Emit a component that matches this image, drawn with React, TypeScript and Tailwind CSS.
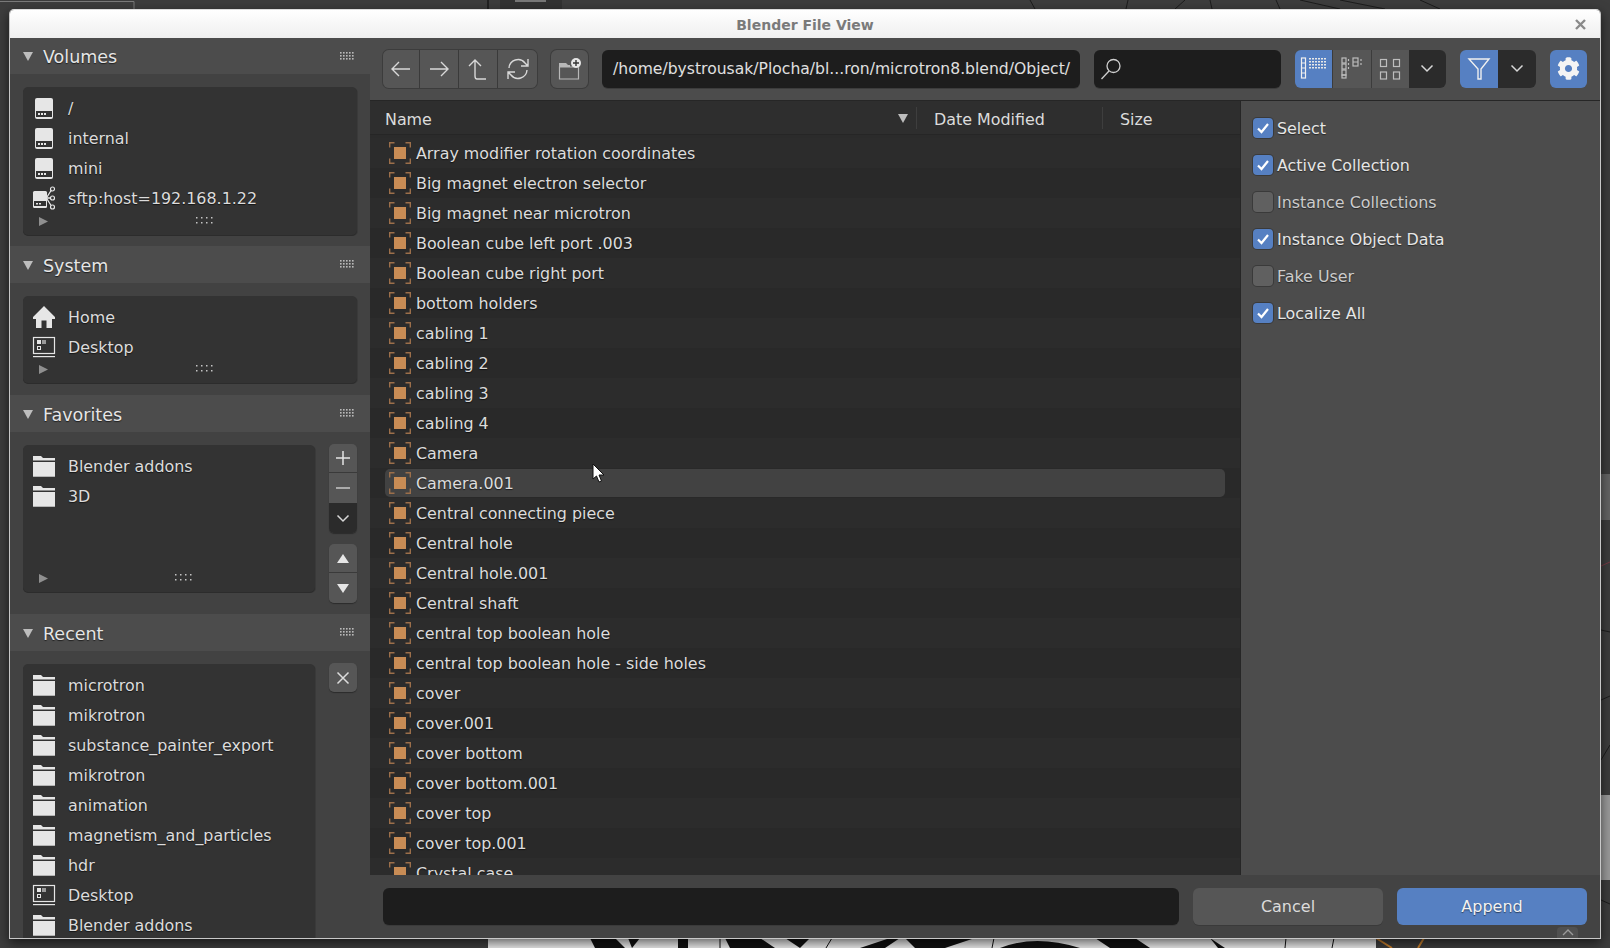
import { FaCog } from "react-icons/fa";

const FILES = [
  "Array modifier rotation coordinates",
  "Big magnet electron selector",
  "Big magnet near microtron",
  "Boolean cube left port .003",
  "Boolean cube right port",
  "bottom holders",
  "cabling 1",
  "cabling 2",
  "cabling 3",
  "cabling 4",
  "Camera",
  "Camera.001",
  "Central connecting piece",
  "Central hole",
  "Central hole.001",
  "Central shaft",
  "central top boolean hole",
  "central top boolean hole - side holes",
  "cover",
  "cover.001",
  "cover bottom",
  "cover bottom.001",
  "cover top",
  "cover top.001",
  "Crystal case",
];

const OPTIONS = [
  { label: "Select", on: true },
  { label: "Active Collection", on: true },
  { label: "Instance Collections", on: false },
  { label: "Instance Object Data", on: true },
  { label: "Fake User", on: false },
  { label: "Localize All", on: true },
];

type IconName = "drive" | "net" | "home" | "desktop" | "folder";

function DriveIcon() {
  return (
    <svg width="24" height="24" viewBox="0 0 24 24">
      <rect x="3" y="2" width="18" height="21" rx="2" fill="#e6e6e6" />
      <rect x="4" y="15" width="16" height="6" fill="#333" />
      <rect x="6" y="17" width="2" height="2" fill="#e6e6e6" />
      <rect x="9" y="17" width="2" height="2" fill="#e6e6e6" />
      <rect x="12" y="17" width="2" height="2" fill="#e6e6e6" />
    </svg>
  );
}

function NetDriveIcon() {
  return (
    <svg width="24" height="24" viewBox="0 0 24 24">
      <rect x="1" y="5" width="14" height="17" rx="1.5" fill="#e6e6e6" />
      <rect x="2" y="15" width="12" height="5" fill="#333" />
      <rect x="4" y="17" width="2" height="1.5" fill="#e6e6e6" />
      <rect x="7" y="17" width="2" height="1.5" fill="#e6e6e6" />
      <path d="M15 11 L20 3 M15 12 H20 M15 13 L20 21" stroke="#e6e6e6" strokeWidth="1.3" fill="none" />
      <circle cx="20.5" cy="3" r="2" fill="#333" stroke="#e6e6e6" strokeWidth="1.2" />
      <circle cx="20.5" cy="12" r="2" fill="#333" stroke="#e6e6e6" strokeWidth="1.2" />
      <circle cx="20.5" cy="21" r="2" fill="#333" stroke="#e6e6e6" strokeWidth="1.2" />
    </svg>
  );
}

function HomeIcon() {
  return (
    <svg width="24" height="24" viewBox="0 0 24 24">
      <path d="M12 1 L23 12 V14 H20 V23 H14.5 V15.5 H9.5 V23 H4 V14 H1 V12 Z" fill="#e6e6e6" />
    </svg>
  );
}

function DesktopIcon() {
  return (
    <svg width="24" height="24" viewBox="0 0 24 24">
      <rect x="1.5" y="2.5" width="21" height="16" fill="none" stroke="#e6e6e6" strokeWidth="1.2" />
      <rect x="1" y="21" width="22" height="1.2" fill="#e6e6e6" />
      <rect x="5" y="5" width="4" height="4" fill="#e6e6e6" />
      <rect x="10" y="5" width="4" height="4" fill="#9a9a9a" />
      <rect x="5.5" y="11.5" width="3" height="3" fill="none" stroke="#e6e6e6" strokeWidth="1" />
    </svg>
  );
}

function FolderIcon() {
  return (
    <svg width="24" height="24" viewBox="0 0 24 24">
      <path d="M1 2 H9 L11 4 H23 V6.5 H1 Z" fill="#e6e6e6" />
      <path d="M1 8 H23 V23 H1 Z" fill="#e6e6e6" />
      <rect x="1" y="22" width="22" height="1" fill="#b4b4b4" />
    </svg>
  );
}

function PlaceIcon({ name }: { name: IconName }) {
  if (name === "drive") return <DriveIcon />;
  if (name === "net") return <NetDriveIcon />;
  if (name === "home") return <HomeIcon />;
  if (name === "desktop") return <DesktopIcon />;
  return <FolderIcon />;
}

function ObjectIcon() {
  return (
    <svg width="22" height="22" viewBox="0 0 22 22" className="shrink-0">
      <path
        d="M.7 5.5 V.7 H5.5 M16.5 .7 H21.3 V5.5 M.7 16.5 V21.3 H5.5 M16.5 21.3 H21.3 V16.5"
        fill="none"
        stroke="#9c6f4a"
        strokeWidth="1.4"
      />
      <rect x="5" y="5" width="12" height="12" fill="#c88c55" />
    </svg>
  );
}

function Grip({ cols, rows, color, step = 3, dot = 1.6 }: { cols: number; rows: number; color: string; step?: number; dot?: number }) {
  const dots = [];
  for (let r = 0; r < rows; r++) {
    for (let c = 0; c < cols; c++) {
      dots.push(<rect key={`${r}-${c}`} x={c * step} y={r * step} width={dot} height={dot} fill={color} />);
    }
  }
  return (
    <svg width={cols * step} height={rows * step}>
      {dots}
    </svg>
  );
}

function Triangle({ dir, size, color }: { dir: "down" | "right"; size: number; color: string }) {
  return (
    <svg width={size} height={size} viewBox="0 0 10 10">
      <path d={dir === "down" ? "M0 1 H10 L5 10 Z" : "M0 0 L10 5 L0 10 Z"} fill={color} />
    </svg>
  );
}

function Chevron({ color = "#d8d8d8" }: { color?: string }) {
  return (
    <svg width="14" height="9" viewBox="0 0 14 9">
      <path d="M1.5 1.5 L7 7 L12.5 1.5" fill="none" stroke={color} strokeWidth="1.5" />
    </svg>
  );
}

function SectionHeader({ title, top }: { title: string; top?: boolean }) {
  return (
    <div className={`flex items-center bg-[#4c4c4c] pl-[13px] pr-[15px] ${top ? "h-[36px]" : "h-[37px]"}`}>
      <Triangle dir="down" size={10} color="#bdbdbd" />
      <span className={`ml-[10px] flex-1 text-[17.5px] text-[#e6e6e6] [text-shadow:0_1px_1px_rgba(0,0,0,0.6)] ${top ? "pt-[2px]" : "pt-[4px]"}`}>
        {title}
      </span>
      <Grip cols={5} rows={3} color="#b9b9b9" />
    </div>
  );
}

function PlaceRow({ icon, label }: { icon: IconName; label: string }) {
  return (
    <div className="flex h-[30px] items-center pl-[9px]">
      <div className="w-[24px] shrink-0">
        <PlaceIcon name={icon} />
      </div>
      <span className="ml-[12px] whitespace-nowrap pt-[2px] text-[15.9px] text-[#dcdcdc] [text-shadow:0_1px_1px_rgba(0,0,0,0.6)]">
        {label}
      </span>
    </div>
  );
}

function PlaceBox({
  items,
  className,
  footer = true,
}: {
  items: { icon: IconName; label: string }[];
  className: string;
  footer?: boolean;
}) {
  return (
    <div className={`flex flex-col rounded-[5px] bg-[#333333] pt-[6px] shadow-[0_1px_0_#2c2c2c,1px_1px_0_#3a3a3a] ${className}`}>
      <div className="flex-1">
        {items.map((it, i) => (
          <PlaceRow key={i} icon={it.icon} label={it.label} />
        ))}
      </div>
      {footer && (
        <div className="relative flex h-[20px] shrink-0 items-center justify-center pb-[6px] pl-[32px]">
          <div className="absolute left-[16px] top-[2px]">
            <Triangle dir="right" size={9} color="#8f8f8f" />
          </div>
          <Grip cols={4} rows={2} color="#c4c4c4" step={5} dot={1.5} />
        </div>
      )}
    </div>
  );
}

function SideButton({ children, className }: { children: React.ReactNode; className: string }) {
  return <div className={`flex w-[28px] items-center justify-center ${className}`}>{children}</div>;
}

function Sidebar() {
  return (
    <div className="flex w-[360px] shrink-0 flex-col overflow-hidden">
      <SectionHeader title="Volumes" top />
      <div className="h-[172px] bg-[#424242] pl-[13px] pr-[13px] pt-[13px]">
        <PlaceBox
          className="h-[148px]"
          items={[
            { icon: "drive", label: "/" },
            { icon: "drive", label: "internal" },
            { icon: "drive", label: "mini" },
            { icon: "net", label: "sftp:host=192.168.1.22" },
          ]}
        />
      </div>
      <SectionHeader title="System" />
      <div className="h-[112px] bg-[#424242] pl-[13px] pr-[13px] pt-[13px]">
        <PlaceBox
          className="h-[87px]"
          items={[
            { icon: "home", label: "Home" },
            { icon: "desktop", label: "Desktop" },
          ]}
        />
      </div>
      <SectionHeader title="Favorites" />
      <div className="flex h-[182px] gap-[14px] bg-[#424242] pl-[13px] pr-[13px] pt-[13px]">
        <PlaceBox
          className="h-[147px] w-[292px]"
          items={[
            { icon: "folder", label: "Blender addons" },
            { icon: "folder", label: "3D" },
          ]}
        />
        <div className="-mt-[1px] flex flex-col">
          <div className="flex flex-col overflow-hidden rounded-[5px] shadow-[0_1px_1px_#2c2c2c]">
            <SideButton className="h-[29px] border-b border-[#3a3a3a] bg-[#565656]">
              <svg width="16" height="16" viewBox="0 0 16 16">
                <path d="M8 1 V15 M1 8 H15" stroke="#e4e4e4" strokeWidth="1.5" />
              </svg>
            </SideButton>
            <SideButton className="h-[30px] bg-[#565656]">
              <svg width="16" height="16" viewBox="0 0 16 16">
                <path d="M1 8 H15" stroke="#c8c8c8" strokeWidth="1.5" />
              </svg>
            </SideButton>
            <SideButton className="h-[30px] bg-[#2b2b2b]">
              <Chevron />
            </SideButton>
          </div>
          <div className="mt-[11px] flex flex-col overflow-hidden rounded-[5px] shadow-[0_1px_1px_#2c2c2c]">
            <SideButton className="h-[29px] border-b border-[#3a3a3a] bg-[#565656]">
              <svg width="14" height="11" viewBox="0 0 14 11">
                <path d="M7 1 L13 10 H1 Z" fill="#e6e6e6" />
              </svg>
            </SideButton>
            <SideButton className="h-[30px] bg-[#565656]">
              <svg width="14" height="11" viewBox="0 0 14 11">
                <path d="M1 1 H13 L7 10 Z" fill="#e6e6e6" />
              </svg>
            </SideButton>
          </div>
        </div>
      </div>
      <SectionHeader title="Recent" />
      <div className="flex min-h-0 flex-1 gap-[14px] overflow-hidden bg-[#424242] pl-[13px] pr-[13px] pt-[13px]">
        <PlaceBox
          className="h-[300px] w-[292px]"
          footer={false}
          items={[
            { icon: "folder", label: "microtron" },
            { icon: "folder", label: "mikrotron" },
            { icon: "folder", label: "substance_painter_export" },
            { icon: "folder", label: "mikrotron" },
            { icon: "folder", label: "animation" },
            { icon: "folder", label: "magnetism_and_particles" },
            { icon: "folder", label: "hdr" },
            { icon: "desktop", label: "Desktop" },
            { icon: "folder", label: "Blender addons" },
          ]}
        />
        <SideButton className="-mt-[1px] h-[29px] rounded-[5px] bg-[#565656] shadow-[0_1px_1px_#2c2c2c]">
          <svg width="14" height="14" viewBox="0 0 14 14">
            <path d="M1.5 1.5 L12.5 12.5 M12.5 1.5 L1.5 12.5" stroke="#dcdcdc" strokeWidth="1.5" />
          </svg>
        </SideButton>
      </div>
    </div>
  );
}

function NavButton({ children, last, className = "w-[39px]" }: { children: React.ReactNode; last?: boolean; className?: string }) {
  return (
    <div className={`flex h-full items-center justify-center bg-[#565656] ${last ? "" : "border-r border-[#3a3a3a]"} ${className}`}>
      {children}
    </div>
  );
}

function ViewIconList() {
  const dots = [];
  for (let r = 0; r < 4; r++) {
    for (let c = 0; c < 6; c++) {
      dots.push(<rect key={`${r}-${c}`} x={9 + c * 3} y={1 + r * 3} width="2" height="1.5" fill="#e8e8e8" />);
    }
  }
  return (
    <svg width="28" height="24" viewBox="0 0 28 24">
      <rect x="1.5" y="1" width="4" height="20" fill="none" stroke="#f0f0f0" strokeWidth="1.2" />
      <path d="M1.5 6 H5.5 M1.5 11 H5.5 M1.5 16 H5.5" stroke="#f0f0f0" strokeWidth="1.2" />
      {dots}
    </svg>
  );
}

function ViewIconMid() {
  return (
    <svg width="24" height="24" viewBox="0 0 24 24" fill="none" stroke="#bdbdbd" strokeWidth="1.2">
      <rect x="2" y="1" width="4" height="5" />
      <rect x="2" y="7" width="4" height="5" />
      <rect x="2" y="13" width="4" height="5" />
      <rect x="2" y="18" width="4" height="3" />
      <rect x="13" y="1" width="5" height="8" />
      <path d="M13 5 H18 M8.5 2 V4 M8.5 6 V8 M8.5 10 V12 M21 2 V4 M21 6 V8" />
    </svg>
  );
}

function ViewIconGrid() {
  return (
    <svg width="24" height="24" viewBox="0 0 24 24" fill="none" stroke="#bdbdbd" strokeWidth="1.2">
      <rect x="2.5" y="2.5" width="6" height="7" />
      <rect x="15.5" y="2.5" width="6" height="7" />
      <rect x="2.5" y="15" width="6" height="7" />
      <rect x="15.5" y="15" width="6" height="7" />
    </svg>
  );
}

function Toolbar() {
  return (
    <div className="flex h-[63px] shrink-0 items-center border-b border-[#262626] bg-[#4c4c4c] pb-[1px] pl-[13px]">
      <div className="flex h-[38px] w-[154px] overflow-hidden rounded-[6px] shadow-[0_0_0_1px_#3c3c3c]">
        <NavButton className="w-[37px]">
          <svg width="22" height="16" viewBox="0 0 22 16" fill="none" stroke="#d8d8d8" strokeWidth="1.4">
            <path d="M20 8 H2 M9 1 L2 8 L9 15" />
          </svg>
        </NavButton>
        <NavButton>
          <svg width="22" height="16" viewBox="0 0 22 16" fill="none" stroke="#d8d8d8" strokeWidth="1.4">
            <path d="M2 8 H20 M13 1 L20 8 L13 15" />
          </svg>
        </NavButton>
        <NavButton>
          <svg width="20" height="22" viewBox="0 0 20 22" fill="none" stroke="#d8d8d8" strokeWidth="1.4">
            <path d="M9 21 H18 M9 21 Q7 21 7 18 V2 M1 8 L7 2 L13 8" />
          </svg>
        </NavButton>
        <NavButton last>
          <svg width="24" height="24" viewBox="0 0 24 24" fill="none" stroke="#d8d8d8" strokeWidth="1.4">
            <path d="M3 11 A9 9 0 0 1 19 6 L22 9 M22 2 V9 H15" />
            <path d="M21 13 A9 9 0 0 1 5 18 L2 15 M2 22 V15 H9" />
          </svg>
        </NavButton>
      </div>
      <div className="ml-[14px] flex h-[38px] w-[37px] items-center justify-center rounded-[6px] bg-[#565656] shadow-[0_0_0_1px_#3c3c3c]">
        <svg width="24" height="22" viewBox="0 0 24 22">
          <path d="M1 5 H8 L10 7 H12 V9 H1 Z" fill="#b8b8b8" />
          <path d="M1.5 9 H20.5 V21 H1.5 Z" fill="none" stroke="#b8b8b8" strokeWidth="1.2" />
          <circle cx="18" cy="5" r="5" fill="#e6e6e6" />
          <path d="M18 2 V8 M15 5 H21" stroke="#333" strokeWidth="1.4" />
        </svg>
      </div>
      <div className="ml-[14px] flex h-[38px] w-[478px] items-center rounded-[6px] bg-[#1d1d1d] pl-[11px] shadow-[0_1px_0_#3c3c3c]">
        <span className="whitespace-nowrap pt-[2px] text-[15.6px] text-[#e0e0e0]">/home/bystrousak/Plocha/bl...ron/microtron8.blend/Object/</span>
      </div>
      <div className="ml-[14px] flex h-[38px] w-[187px] items-center rounded-[6px] bg-[#1d1d1d] pl-[6px] shadow-[0_1px_0_#3c3c3c]">
        <svg width="22" height="24" viewBox="0 0 22 24" fill="none" stroke="#cfcfcf" strokeWidth="1.3">
          <circle cx="13.5" cy="9" r="6.5" />
          <path d="M9 14 L1.5 22" />
        </svg>
      </div>
      <div className="ml-[14px] flex h-[38px] w-[151px] overflow-hidden rounded-[6px]">
        <div className="flex flex-1 items-center justify-center bg-[#5680c2]">
          <ViewIconList />
        </div>
        <div className="flex flex-1 items-center justify-center border-l border-[#3c3c3c] bg-[#565656]">
          <ViewIconMid />
        </div>
        <div className="flex flex-1 items-center justify-center border-l border-[#3c3c3c] bg-[#565656]">
          <ViewIconGrid />
        </div>
        <div className="flex flex-1 items-center justify-center bg-[#2b2b2b]">
          <Chevron />
        </div>
      </div>
      <div className="ml-[14px] flex h-[38px] w-[76px] overflow-hidden rounded-[6px]">
        <div className="flex flex-1 items-center justify-center bg-[#5680c2]">
          <svg width="24" height="24" viewBox="0 0 24 24" fill="none" stroke="#f0f0f0" strokeWidth="1.4">
            <path d="M2 2 H22 L14 12 V22 H11 V12 Z" />
          </svg>
        </div>
        <div className="flex flex-1 items-center justify-center bg-[#2b2b2b]">
          <Chevron />
        </div>
      </div>
      <div className="ml-[14px] flex h-[38px] w-[37px] items-center justify-center rounded-[6px] bg-[#5680c2]">
        <FaCog className="h-[23px] w-[23px] text-[#f4f4f4]" />
      </div>
    </div>
  );
}

function ColumnHeader() {
  return (
    <div className="flex h-[34px] shrink-0 items-center border-b border-[#262626] bg-[#2e2e2e] text-[15.9px] text-[#dcdcdc]">
      <div className="flex h-[22px] w-[547px] items-center justify-between border-r border-[#3e3e3e] pl-[15px] pr-[8px]">
        <span className="pt-[4px]">Name</span>
        <svg width="10" height="10" viewBox="0 0 10 10">
          <path d="M0 1 H10 L5 10 Z" fill="#bdbdbd" />
        </svg>
      </div>
      <div className="flex h-[22px] w-[186px] items-center border-r border-[#3e3e3e] pl-[17px]">
        <span className="pt-[4px]">Date Modified</span>
      </div>
      <div className="pl-[17px] pt-[4px]">Size</div>
    </div>
  );
}

function FileList() {
  return (
    <div className="flex min-h-0 flex-1 flex-col overflow-hidden bg-[#2b2b2b] pt-[3px]">
      {FILES.map((name, i) => (
        <div key={name} className={`h-[30px] shrink-0 px-[15px] py-[1px] ${i % 2 === 0 ? "bg-[#2c2c2c]" : "bg-[#292929]"}`}>
          <div className={`flex h-[28px] items-center rounded-[5px] pl-[4px] ${name === "Camera.001" ? "bg-[#424242]" : ""}`}>
            <ObjectIcon />
            <span className="ml-[5px] whitespace-nowrap pt-[2px] text-[15.9px] text-[#dcdcdc] [text-shadow:0_1px_1px_rgba(0,0,0,0.6)]">
              {name}
            </span>
          </div>
        </div>
      ))}
    </div>
  );
}

function OptionsPanel() {
  return (
    <div className="flex w-[360px] shrink-0 flex-col gap-[15px] border-l border-[#262626] bg-[#4c4c4c] pl-[12px] pt-[16px]">
      {OPTIONS.map((o) => (
        <div key={o.label} className="flex h-[22px] items-center">
          <div
            className={`flex h-[20px] w-[20px] items-center justify-center rounded-[4px] shadow-[0_0_0_1px_#3a3a3a] ${
              o.on ? "bg-[#5680c2]" : "bg-[#606060]"
            }`}
          >
            {o.on && (
              <svg width="14" height="14" viewBox="0 0 14 14">
                <path d="M2 7.5 L5.5 11 L12 3" fill="none" stroke="#ffffff" strokeWidth="2.2" />
              </svg>
            )}
          </div>
          <span
            className={`ml-[4px] whitespace-nowrap pt-[2px] text-[15.9px] [text-shadow:0_1px_1px_rgba(0,0,0,0.5)] ${
              o.on ? "text-[#e6e6e6]" : "text-[#cccccc]"
            }`}
          >
            {o.label}
          </span>
        </div>
      ))}
    </div>
  );
}

function BottomBar() {
  return (
    <div className="flex h-[63px] shrink-0 items-start gap-[14px] bg-[#434343] pl-[13px] pt-[13px]">
      <div className="h-[37px] w-[796px] rounded-[6px] bg-[#1d1d1d] shadow-[0_1px_0_#3a3a3a]" />
      <div className="flex h-[37px] w-[190px] items-center justify-center rounded-[6px] bg-[#565656] text-[16px] text-[#dcdcdc] shadow-[0_1px_0_#3a3a3a]">
        Cancel
      </div>
      <div className="flex h-[37px] w-[190px] items-center justify-center rounded-[6px] bg-[#5680c2] text-[16px] text-[#f2f2f2] [text-shadow:0_1px_1px_rgba(0,0,0,0.5)]">
        Append
      </div>
    </div>
  );
}

function Viewport() {
  // what shows of the 3D viewport around the dialog
  return (
    <svg className="absolute inset-0" width="1610" height="948" viewBox="0 0 1610 948">
      <rect width="1610" height="948" fill="#3d3d3d" />
      <path d="M0 1.5 H134 V9" fill="none" stroke="#7a7a7a" />
      <path d="M488 0 V9" stroke="#222" strokeWidth="2" />
      <rect x="500" y="0" width="62" height="9" fill="#323232" />
      <rect x="515" y="0" width="31" height="2" fill="#777" />
      <path d="M1030 0 L1035 9 M1128 0 L1126 9 M1175 9 L1185 0 M1210 0 L1212 9 M1276 0 L1280 9 M1300 0 L1340 9 M1340 0 L1385 9 M1420 0 L1440 9" stroke="#1c1c1c" fill="none" />
      <rect x="488" y="938" width="888" height="10" fill="#ececec" />
      <path d="M1376 938 L1392 948 M1424 938 L1418 948" stroke="#c9812f" strokeWidth="2" fill="none" />
      <g fill="#111">
        <path d="M590 938 H615 L625 948 H595 Z" />
        <path d="M628 938 H640 L632 948 Z" />
        <rect x="678" y="938" width="10" height="10" />
        <path d="M725 938 H760 L775 948 H730 Z" />
        <path d="M785 938 H810 L800 948 Z" />
        <path d="M860 948 L890 938 H900 L885 948 Z" />
        <path d="M905 938 H975 L945 948 H915 Z" />
        <path d="M1000 948 Q1035 934 1080 948 Z" />
        <path d="M1095 938 H1135 L1150 948 H1110 Z" />
        <path d="M1210 938 L1225 948 H1218 Z" />
      </g>
      <path d="M720 938 V948 M832 938 L826 948 M994 938 L992 948 M1286 938 L1285 948 M1334 938 L1332 948" stroke="#111" fill="none" />
      <rect x="1601" y="474" width="9" height="46" fill="#636363" />
      <path d="M1601 566 L1610 562" stroke="#7a3a45" />
      <rect x="1601" y="795" width="9" height="85" fill="#9a9a9a" />
      <path d="M1601 630 L1610 632 M1601 700 L1610 696 M1601 760 L1610 745 M1601 900 L1610 904" stroke="#1c1c1c" fill="none" />
    </svg>
  );
}

export default function App() {
  return (
    <div className="relative h-[948px] w-[1610px] overflow-hidden bg-[#3d3d3d] font-['DejaVu_Sans',sans-serif]">
      <Viewport />
      <div className="absolute left-[9px] top-[9px] flex h-[930px] w-[1592px] flex-col overflow-hidden rounded-t-[5px] border border-[#c8c8c8] border-t-[#dcdcdc] shadow-[0_4px_12px_rgba(0,0,0,0.6)]">
        <div className="relative flex h-[28px] shrink-0 items-center justify-center bg-gradient-to-b from-white to-[#efefef] pt-[3px]">
          <span className="text-[14px] font-bold text-[#7a7a7a]">Blender File View</span>
          <svg className="absolute right-[14px] top-[9px]" width="11" height="11" viewBox="0 0 11 11">
            <path d="M1 1 L10 10 M10 1 L1 10" stroke="#8a8a8a" strokeWidth="2.4" />
          </svg>
        </div>
        <div className="flex min-h-0 flex-1">
          <Sidebar />
          <div className="flex min-w-0 flex-1 flex-col">
            <Toolbar />
            <div className="flex min-h-0 flex-1">
              <div className="flex min-w-0 flex-1 flex-col">
                <ColumnHeader />
                <FileList />
              </div>
              <OptionsPanel />
            </div>
            <BottomBar />
          </div>
        </div>
      </div>
      {/* mouse pointer */}
      <svg className="absolute left-[592px] top-[463px]" width="14" height="21" viewBox="0 0 14 21">
        <path d="M1 1 V16 L4.5 13 L7 19 L9.5 18 L7 12 H12 Z" fill="#ffffff" stroke="#111" strokeWidth="1" />
      </svg>
      {/* corner tab */}
      <div className="absolute left-[1557px] top-[927px] flex h-[11px] w-[21px] items-center justify-center rounded-t-[4px] bg-[#505050]">
        <svg width="12" height="7" viewBox="0 0 12 7">
          <path d="M1 6 L6 1 L11 6" fill="none" stroke="#9a9a9a" strokeWidth="1.4" />
        </svg>
      </div>
    </div>
  );
}
